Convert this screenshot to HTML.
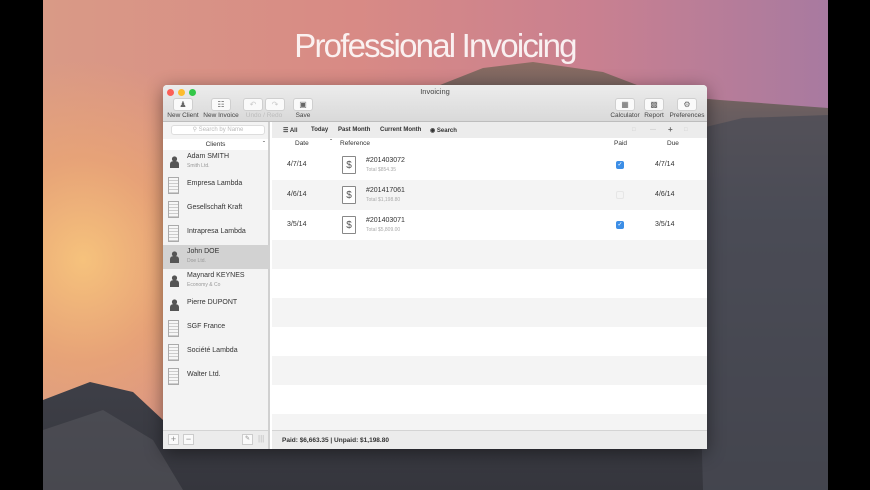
<!DOCTYPE html>
<html><head><meta charset="utf-8"><style>
*{box-sizing:border-box;margin:0;padding:0}
body{width:870px;height:490px;overflow:hidden;background:#000;font-family:"Liberation Sans",sans-serif;position:relative}
#bg{position:absolute;left:43px;top:0;width:785px;height:490px;overflow:hidden;
background:radial-gradient(ellipse 180px 200px at 40px 260px,#f6c27c 0%,rgba(240,170,110,0.6) 50%,rgba(220,140,120,0) 100%),
linear-gradient(90deg,#d99a86 0%,#d88a85 40%,#c98090 70%,#a87aa0 100%);}
#title{position:absolute;left:0;width:870px;top:27px;text-align:center;font-size:33px;color:rgba(255,255,255,0.88);letter-spacing:-1.8px;font-weight:300}
.win{position:absolute;left:163px;top:85px;width:544px;height:364px;background:#fff;box-shadow:0 4px 18px rgba(0,0,0,.45);border-radius:4px 4px 0 0;overflow:hidden}
.tb{position:absolute;left:0;top:0;width:544px;height:37px;background:linear-gradient(#ececec,#d9d9d9);border-bottom:1px solid #bdbdbd}
.dot{position:absolute;top:4px;width:7px;height:7px;border-radius:50%}
.tbtn{position:absolute;top:13px;font-size:6.5px;color:#444;text-align:center}
.tbtn .b{width:20px;height:13px;margin:0 auto 1px;background:#fafafa;border:1px solid #cfcfcf;border-radius:3px;font-size:8px;line-height:11px;color:#666}
.side{position:absolute;left:0;top:37px;width:107px;height:327px;background:#f3f3f3;border-right:2px solid #d0d0d0}
.srow{position:absolute;left:0;width:107px;height:24px;font-size:7px;color:#333}
.srow .n{position:absolute;left:24px;top:6px}
.srow .n2{position:absolute;left:24px;top:3px}
.srow .s{position:absolute;left:24px;top:13px;font-size:5px;color:#999}
.pi{position:absolute;left:7px;top:6px;width:9px;height:12px}
.bi{position:absolute;left:5px;top:3px;width:11px;height:17px;border:1px solid #aaa;background:repeating-linear-gradient(#f6f6f6 0 2px,#ccc 2px 3px);}
.main{position:absolute;left:109px;top:37px;width:435px;height:327px}
.fb{position:absolute;left:0;top:0;width:435px;height:16px;background:#ececec;font-size:6px;font-weight:bold;color:#333}
.fb span{position:absolute;top:5px}
.hdr{position:absolute;top:16px;left:0;width:435px;height:12px;background:#fff;font-size:6.5px;color:#333}
.row{position:absolute;left:0;width:435px;height:30px;font-size:7px;color:#333}
.row .d{position:absolute;left:15px;top:11px}
.row .du{position:absolute;left:383px;top:11px}
.row .r{position:absolute;left:94px;top:7px}
.row .t{position:absolute;left:94px;top:17px;font-size:5px;color:#aaa}
.doc{position:absolute;left:70px;top:6px;width:14px;height:18px;border:1px solid #888;background:#fff;font-size:10px;text-align:center;line-height:18px;color:#555;border-radius:1px}
.cb{position:absolute;left:344px;top:11px;width:8px;height:8px;border-radius:2px;background:#3c8ee6;color:#fff;font-size:6px;line-height:8px;text-align:center}
.bot{position:absolute;left:0;top:308px;width:435px;height:19px;background:#ececec;border-top:1px solid #d4d4d4;font-size:6.5px;font-weight:bold;color:#333;padding:6px 0 0 10px}
</style></head><body>
<div id="bg">
<svg width="785" height="490" style="position:absolute;left:0;top:0">
<defs><linearGradient id="m" x1="0" y1="0" x2="0" y2="1"><stop offset="0" stop-color="#8a6c62"/><stop offset=".12" stop-color="#6a5e60"/><stop offset=".35" stop-color="#4c4d57"/><stop offset="1" stop-color="#35363d"/></linearGradient></defs>
<polygon points="397,85 440,68 490,62 560,72 620,95 677,100 785,108 785,490 0,490 0,400 47,382 90,392 120,420 300,440" fill="url(#m)"/>
<polygon points="650,130 700,118 785,115 785,490 660,490" fill="#4a4b55" opacity=".7"/>
<polygon points="0,430 60,410 110,440 140,490 0,490" fill="#55555b" opacity=".6"/>
</svg>
</div>
<div id="title">Professional Invoicing</div>
<div class="win">
 <div class="tb">
  <div class="dot" style="left:4px;background:#fc5f57"></div>
  <div class="dot" style="left:15px;background:#fdbc2e"></div>
  <div class="dot" style="left:26px;background:#33c748"></div>
  <div style="position:absolute;left:0;width:544px;top:2px;text-align:center;font-size:7.5px;color:#444">Invoicing</div>
  <div class="tbtn" style="left:4px;width:32px"><div class="b">&#9823;</div>New Client</div>
  <div class="tbtn" style="left:40px;width:36px"><div class="b">&#9783;</div>New Invoice</div>
  <div class="tbtn" style="left:80px;width:42px;color:#bbb"><div style="display:flex;gap:2px;justify-content:center"><div class="b" style="margin:0 0 1px;color:#ccc">&#8630;</div><div class="b" style="margin:0 0 1px;color:#ccc">&#8631;</div></div>Undo / Redo</div>
  <div class="tbtn" style="left:128px;width:24px"><div class="b">&#9635;</div>Save</div>
  <div class="tbtn" style="left:446px;width:32px"><div class="b">&#9638;</div>Calculator</div>
  <div class="tbtn" style="left:478px;width:26px"><div class="b">&#9641;</div>Report</div>
  <div class="tbtn" style="left:504px;width:40px"><div class="b">&#9881;</div>Preferences</div>
 </div>
 <div class="side">
  <div style="position:absolute;left:8px;top:3px;width:94px;height:10px;background:#fff;border:1px solid #ddd;border-radius:3px;font-size:6px;color:#bbb;text-align:center;line-height:8px">&#9906; Search by Name</div>
  <div style="position:absolute;left:0;top:17px;width:105px;height:11px;background:#fff;font-size:6.5px;color:#333;text-align:center;line-height:11px">Clients<span style="position:absolute;right:3px">&#710;</span></div>
  <div class="srow" style="top:28px"><svg class="pi" viewBox="0 0 9 12"><circle cx="4.5" cy="3" r="2.6" fill="#555"/><path d="M0 12V8q0-3 4.5-3t4.5 3v4z" fill="#555"/></svg><span class="n2">Adam SMITH</span><span class="s">Smith Ltd.</span></div>
  <div class="srow" style="top:52px"><div class="bi"></div><span class="n">Empresa Lambda</span></div>
  <div class="srow" style="top:76px"><div class="bi"></div><span class="n">Gesellschaft Kraft</span></div>
  <div class="srow" style="top:100px"><div class="bi"></div><span class="n">Intrapresa Lambda</span></div>
  <div class="srow" style="top:123px;background:#d2d2d2"><svg class="pi" viewBox="0 0 9 12"><circle cx="4.5" cy="3" r="2.6" fill="#555"/><path d="M0 12V8q0-3 4.5-3t4.5 3v4z" fill="#555"/></svg><span class="n2">John DOE</span><span class="s">Doe Ltd.</span></div>
  <div class="srow" style="top:147px"><svg class="pi" viewBox="0 0 9 12"><circle cx="4.5" cy="3" r="2.6" fill="#555"/><path d="M0 12V8q0-3 4.5-3t4.5 3v4z" fill="#555"/></svg><span class="n2">Maynard KEYNES</span><span class="s">Economy &amp; Co</span></div>
  <div class="srow" style="top:171px"><svg class="pi" viewBox="0 0 9 12"><circle cx="4.5" cy="3" r="2.6" fill="#555"/><path d="M0 12V8q0-3 4.5-3t4.5 3v4z" fill="#555"/></svg><span class="n">Pierre DUPONT</span></div>
  <div class="srow" style="top:195px"><div class="bi"></div><span class="n">SGF France</span></div>
  <div class="srow" style="top:219px"><div class="bi"></div><span class="n">Société Lambda</span></div>
  <div class="srow" style="top:243px"><div class="bi"></div><span class="n">Walter Ltd.</span></div>
  <div style="position:absolute;left:0;top:308px;width:105px;height:19px;background:#ececec;border-top:1px solid #d4d4d4;font-size:9px;color:#888">
   <span style="position:absolute;left:5px;top:3px;width:11px;height:11px;background:#fafafa;border:1px solid #ccc;text-align:center;line-height:9px">+</span>
   <span style="position:absolute;left:20px;top:3px;width:11px;height:11px;background:#fafafa;border:1px solid #ccc;text-align:center;line-height:9px">−</span>
   <span style="position:absolute;left:79px;top:3px;width:11px;height:11px;background:#fafafa;border:1px solid #ccc;text-align:center;line-height:9px;font-size:6px">&#9998;</span>
   <span style="position:absolute;left:95px;top:3px;font-size:8px;color:#bbb">|||</span>
  </div>
 </div>
 <div class="main">
  <div class="fb"><span style="left:11px">&#9776; All</span><span style="left:39px">Today</span><span style="left:66px">Past Month</span><span style="left:108px">Current Month</span><span style="left:158px">&#9673; Search</span>
   <span style="left:360px;color:#ccc;font-weight:normal">&#9633;</span><span style="left:378px;color:#ccc">—</span><span style="left:396px;color:#666;font-size:8px;top:3px">+</span><span style="left:412px;color:#ccc">&#9633;</span></div>
  <div class="hdr"><span style="position:absolute;left:23px;top:2px">Date</span><span style="position:absolute;left:58px;top:1px">&#711;</span><span style="position:absolute;left:68px;top:2px">Reference</span><span style="position:absolute;left:342px;top:2px">Paid</span><span style="position:absolute;left:395px;top:2px">Due</span></div>
  <div class="row" style="top:28px;background:#fff"><span class="d">4/7/14</span><div class="doc">$</div><span class="r">#201403072</span><span class="t">Total $854.35</span><div class="cb">✓</div><span class="du">4/7/14</span></div>
  <div class="row" style="top:58px;background:#f4f4f4"><span class="d">4/6/14</span><div class="doc">$</div><span class="r">#201417061</span><span class="t">Total $1,198.80</span><div class="cb" style="background:#f4f4f4;border:1px solid #e6e6e6"></div><span class="du">4/6/14</span></div>
  <div class="row" style="top:88px;background:#fff"><span class="d">3/5/14</span><div class="doc">$</div><span class="r">#201403071</span><span class="t">Total $5,809.00</span><div class="cb">✓</div><span class="du">3/5/14</span></div>
  <div style="position:absolute;left:0;top:118px;width:435px;height:190px;background:repeating-linear-gradient(#f4f4f4 0 29px,#fff 29px 58px)"></div>
  <div class="bot">Paid: $6,663.35 | Unpaid: $1,198.80</div>
 </div>
</div>
</body></html>
